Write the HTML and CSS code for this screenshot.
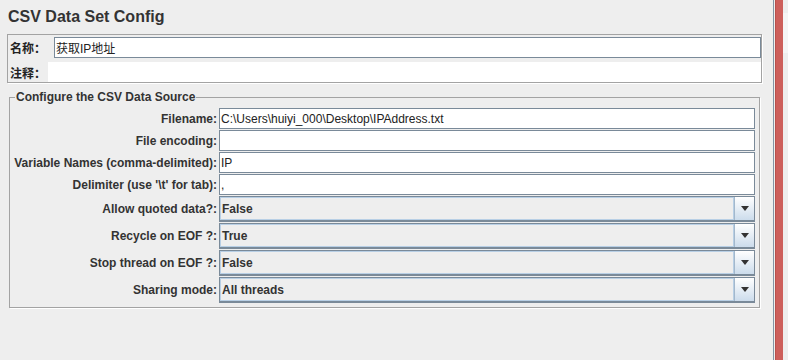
FILE: index.html
```html
<!DOCTYPE html>
<html lang="zh">
<head>
  <meta charset="UTF-8" />
  <title>CSV Data Set Config</title>
  <link rel="stylesheet" href="styles.css">
</head>
<body>
  <div class="page">
    <div class="editor">
      <h1>CSV Data Set Config</h1>

      <!-- name / comment -->
      <div class="name-panel">
        <div class="name-row">
          <label class="cn-label name-label">名称：</label>
          <input class="field name-field" type="text" value="获取IP地址" />
        </div>
        <div class="name-row comment-row">
          <label class="cn-label comment-label">注释：</label>
          <div class="comment-field"></div>
        </div>
      </div>

      <!-- data source -->
      <fieldset class="source">
        <legend>Configure the CSV Data Source</legend>
        <div class="form-grid">
          <label>Filename:</label>
          <input class="field" type="text" value="C:\Users\huiyi_000\Desktop\IPAddress.txt" />

          <label>File encoding:</label>
          <input class="field" type="text" value="" />

          <label>Variable Names (comma-delimited):</label>
          <input class="field" type="text" value="IP" />

          <label>Delimiter (use '\t' for tab):</label>
          <input class="field" type="text" value="," />

          <label class="combo-label">Allow quoted data?:</label>
          <div class="combo"><span class="combo-value">False</span><span class="combo-btn"><i class="arrow"></i></span></div>

          <label class="combo-label">Recycle on EOF ?:</label>
          <div class="combo"><span class="combo-value">True</span><span class="combo-btn"><i class="arrow"></i></span></div>

          <label class="combo-label">Stop thread on EOF ?:</label>
          <div class="combo"><span class="combo-value">False</span><span class="combo-btn"><i class="arrow"></i></span></div>

          <label class="combo-label">Sharing mode:</label>
          <div class="combo"><span class="combo-value">All threads</span><span class="combo-btn"><i class="arrow"></i></span></div>
        </div>
      </fieldset>
    </div>

    <div class="splitter"></div>
    <div class="scroll-edge"></div>
    <div class="side"></div>
  </div>
</body>
</html>
```

FILE: styles.css
```css
html,
body {
  margin: 0;
  height: 100%;
}

body {
  background: #eeeeee;
  font-family: "Liberation Sans", Arial, "Noto Sans CJK SC", sans-serif;
  font-size: 12px;
  color: #333333;
}

.page {
  display: flex;
  height: 100%;
}

.editor {
  width: 773px;
  flex: none;
}

h1 {
  margin: 0;
  padding: 8px 0 8px 8px;
  font-size: 16px;
  line-height: 18px;
  font-weight: bold;
  color: #333333;
}

/* name / comment panel */
.name-panel {
  margin-left: 7px;
  width: 753px;
  border: 1px solid #a3a3a3;
  box-shadow: 1px 1px 0 #ffffff;
  padding-top: 1px;
}

.name-row {
  display: flex;
  align-items: center;
  height: 22px;
}

.comment-row {
  margin-top: 4px;
  height: 20px;
}

.cn-label {
  flex: none;
  padding-left: 2px;
  box-sizing: border-box;
  font-family: "Noto Sans CJK SC", sans-serif;
  font-weight: bold;
  font-size: 12px;
  color: #222222;
}

.name-label {
  width: 46px;
}

.comment-label {
  width: 40px;
}

.name-field {
  flex: 1;
  height: 22px;
  margin-right: 1px;
}

.comment-field {
  flex: 1;
  height: 20px;
  background: #ffffff;
}

/* text fields */
.field {
  box-sizing: border-box;
  height: 21px;
  margin: 0;
  padding: 0 0 0 1px;
  border: 1px solid #7a8a99;
  background: #ffffff;
  font-family: "Liberation Sans", Arial, "Noto Sans CJK SC", sans-serif;
  font-size: 12px;
  color: #222222;
  outline: none;
}

/* data source group */
.source {
  margin: 7px 0 0 9px;
  width: 742px;
  padding: 0 4px 4px 3px;
  border: 1px solid #a3a3a3;
  box-shadow: 1px 1px 0 #ffffff;
  min-width: 0;
}

.source legend {
  margin-left: 2px;
  padding: 0 1px;
  font-weight: bold;
  font-size: 12px;
  line-height: 14px;
  color: #333333;
}

.form-grid {
  display: grid;
  grid-template-columns: 204px 536px;
  column-gap: 2px;
  row-gap: 1px;
  margin-top: 4px;
  align-items: center;
}

.form-grid label {
  text-align: right;
  font-weight: bold;
  white-space: nowrap;
}

/* combo boxes */
.combo {
  display: flex;
  height: 26px;
  box-sizing: border-box;
  border: 1px solid #7a8a99;
  border-bottom-width: 2px;
  background: #eeeeee;
}

.combo-value {
  flex: 1;
  display: flex;
  align-items: center;
  padding-left: 2px;
  box-shadow: inset 1px 1px 0 #b8cfe5, inset -1px -1px 0 #b8cfe5;
  font-weight: bold;
  color: #333333;
}

.combo-btn {
  width: 19px;
  display: flex;
  align-items: center;
  justify-content: center;
  border-left: 1px solid #a3b8cc;
  background: linear-gradient(#ffffff, #ccdcec);
}

.arrow {
  width: 0;
  height: 0;
  border-left: 4px solid transparent;
  border-right: 4px solid transparent;
  border-top: 5px solid #333333;
}

/* right edge */
.splitter {
  width: 1px;
  background: #8595a4;
}

.scroll-edge {
  margin-left: 1px;
  width: 8px;
  background: #cd5f5b;
  border-left: 1px solid #b9504c;
  box-sizing: border-box;
}

.side {
  flex: 1;
  background: linear-gradient(#eeeeee 13px, #f5f5f5 13px, #f5f5f5 53px, #eeeeee 53px);
}
```
